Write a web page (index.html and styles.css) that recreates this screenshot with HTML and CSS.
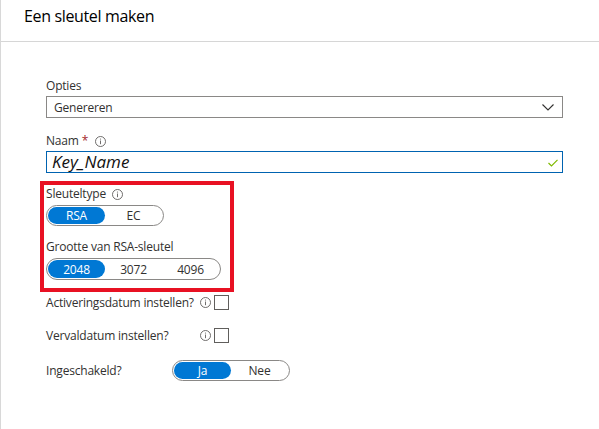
FILE: index.html
```html
<!DOCTYPE html>
<html lang="nl">
<head>
<meta charset="utf-8">
<title>Een sleutel maken</title>
<link rel="stylesheet" href="styles.css">
</head>
<body>
<div class="page">
  <header class="header">
    <h1 class="title">Een sleutel maken</h1>
  </header>
  <main class="form">
    <div class="field field-opties">
      <div class="label">Opties</div>
      <div class="select">
        <span>Genereren</span>
        <svg class="chevron" width="12" height="7" viewBox="0 0 12 7"><polyline points="0.5,0.5 6,6 11.5,0.5" fill="none" stroke="#323130" stroke-width="1.1"/></svg>
      </div>
    </div>
    <div class="field field-naam">
      <div class="label">Naam<span class="req">*</span>
        <svg class="info" width="11" height="11" viewBox="0 0 11 11"><circle cx="5.5" cy="5.5" r="5" fill="none" stroke="#605e5c" stroke-width="0.9"/><line x1="5.5" y1="4.5" x2="5.5" y2="8.2" stroke="#605e5c" stroke-width="0.9"/><circle cx="5.5" cy="3" r="0.6" fill="#605e5c"/></svg>
      </div>
      <div class="input">
        <span class="value">Key_Name</span>
        <svg class="check" width="10" height="8" viewBox="0 0 10 8"><polyline points="0.5,4 3.5,7 9.5,0.8" fill="none" stroke="#7fba00" stroke-width="1.2"/></svg>
      </div>
    </div>
    <div class="highlight">
      <div class="field field-type">
        <div class="label">Sleuteltype
          <svg class="info" width="11" height="11" viewBox="0 0 11 11"><circle cx="5.5" cy="5.5" r="5" fill="none" stroke="#605e5c" stroke-width="0.9"/><line x1="5.5" y1="4.5" x2="5.5" y2="8.2" stroke="#605e5c" stroke-width="0.9"/><circle cx="5.5" cy="3" r="0.6" fill="#605e5c"/></svg>
        </div>
        <div class="toggle">
          <span class="opt on">RSA</span>
          <span class="opt">EC</span>
        </div>
      </div>
      <div class="field field-size">
        <div class="label">Grootte van RSA-sleutel</div>
        <div class="toggle">
          <span class="opt on">2048</span>
          <span class="opt">3072</span>
          <span class="opt">4096</span>
        </div>
      </div>
    </div>
    <div class="row row-act">
      <div class="row-label">
        <span>Activeringsdatum instellen?</span>
        <svg class="info" width="11" height="11" viewBox="0 0 11 11"><circle cx="5.5" cy="5.5" r="5" fill="none" stroke="#605e5c" stroke-width="0.9"/><line x1="5.5" y1="4.5" x2="5.5" y2="8.2" stroke="#605e5c" stroke-width="0.9"/><circle cx="5.5" cy="3" r="0.6" fill="#605e5c"/></svg>
      </div>
      <span class="checkbox"></span>
    </div>
    <div class="row row-exp">
      <div class="row-label">
        <span>Vervaldatum instellen?</span>
        <svg class="info" width="11" height="11" viewBox="0 0 11 11"><circle cx="5.5" cy="5.5" r="5" fill="none" stroke="#605e5c" stroke-width="0.9"/><line x1="5.5" y1="4.5" x2="5.5" y2="8.2" stroke="#605e5c" stroke-width="0.9"/><circle cx="5.5" cy="3" r="0.6" fill="#605e5c"/></svg>
      </div>
      <span class="checkbox"></span>
    </div>
    <div class="row row-enabled">
      <div class="row-label short">Ingeschakeld?</div>
      <div class="toggle">
        <span class="opt on">Ja</span>
        <span class="opt">Nee</span>
      </div>
    </div>
  </main>
</div>
</body>
</html>
```

FILE: styles.css
```css
* { box-sizing: border-box; }
html, body { margin: 0; padding: 0; background: #fff; }
body {
  font-family: "Open Sans", "Noto Sans", sans-serif;
  font-size: 12px;
  letter-spacing: -0.2px;
  color: #323130;
  width: 599px;
  height: 429px;
  overflow: hidden;
}
.page {
  height: 429px;
  border-left: 1px solid #d8d8d8;
}
.header {
  height: 42px;
  border-bottom: 1px solid #d6d6d6;
  padding: 5px 0 0 23px;
}
.title {
  margin: 0;
  font-size: 16px;
  letter-spacing: -0.35px;
  font-weight: 400;
  line-height: 22px;
  color: #000;
}
.form {
  padding: 36px 0 0 45px;
  width: 562px;
}
.field { display: flex; flex-direction: column; }
.label {
  display: flex;
  align-items: center;
  height: 16px;
  line-height: 16px;
  color: #323130;
}
.req { color: #a4262c; margin-left: 3px; }
.label .info { margin-left: 6px; }
.req + .info { margin-left: 7px; }
.select {
  margin-top: 2px;
  height: 22px;
  border: 1px solid #8a8886;
  display: flex;
  align-items: center;
  justify-content: space-between;
  padding: 0 8px 0 7px;
}
.field-naam { margin-top: 15px; }
.input {
  margin-top: 2px;
  height: 22px;
  border: 1px solid #0063b1;
  display: flex;
  align-items: center;
  justify-content: space-between;
  padding: 0 4px 0 5px;
}
.value {
  font-style: italic;
  font-size: 17px;
  letter-spacing: 0;
  line-height: 20px;
  color: #111;
}
.check { margin-top: 2px; }
.highlight {
  position: relative;
  width: 176px;
  margin-top: 13px;
}
.highlight::after {
  content: "";
  position: absolute;
  left: -6px;
  right: -12px;
  top: -5px;
  bottom: -12px;
  border: 4px solid #e81123;
  pointer-events: none;
}
.toggle {
  margin-top: 3px;
  display: flex;
  align-self: flex-start;
  border: 1px solid #8a8886;
  border-radius: 11px;
  padding: 1px;
  height: 21px;
}
.opt {
  width: 57px;
  display: flex;
  align-items: center;
  justify-content: center;
  border-radius: 9px;
  color: #323130;
  line-height: 17px;
}
.opt.on { background: #0078d4; color: #fff; }
.field-size { margin-top: 13px; }
.field-size .toggle { height: 22px; }
.row {
  display: flex;
  align-items: center;
  height: 16px;
}
.row-act { margin-top: 14px; }
.row-exp { margin-top: 17px; }
.row-enabled { margin-top: 17px; height: 21px; }
.row-label {
  width: 168px;
  display: flex;
  align-items: center;
  justify-content: space-between;
}
.row-label .info { margin-right: 3px; }
.row-label.short { width: 126px; }
.checkbox {
  width: 15px;
  height: 15px;
  border: 1px solid #605e5c;
}
.row-enabled .toggle { margin-top: 0; }
```
